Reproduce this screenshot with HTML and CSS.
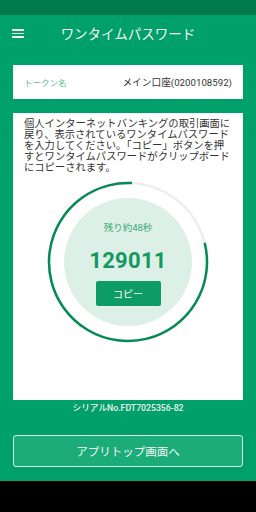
FILE: index.html
```html
<!DOCTYPE html>
<html lang="ja">
<head>
    <meta charset="UTF-8">
    <meta name="viewport" content="width=device-width, initial-scale=1.0">
    <title>ワンタイムパスワード</title>
    <link rel="stylesheet" href="styles.css">
</head>
<body>
    <div class="screen">
        <div class="status-bar"></div>

        <div class="app-bar">
            <div class="menu-icon">
                <span></span><span></span><span></span>
            </div>
            <h1>ワンタイムパスワード</h1>
            <div></div>
        </div>

        <div class="content">
            <div class="card token-card">
                <div class="token-label">トークン名</div>
                <div class="token-value">メイン口座(0200108592)</div>
            </div>

            <div class="card otp-card">
                <p class="notice">個人インターネットバンキングの取引画面に戻り、表示されているワンタイムパスワードを入力してください。「コピー」ボタンを押すとワンタイムパスワードがクリップボードにコピーされます。</p>

                <div class="timer">
                    <svg class="timer-ring" width="162" height="162" viewBox="0 0 162 162">
                        <circle cx="81" cy="81" r="79" fill="none" stroke="#eeeeee" stroke-width="2.5"/>
                        <circle cx="81" cy="81" r="79" fill="none" stroke="#058a52" stroke-width="2.5"
                                stroke-dasharray="395 500" transform="rotate(-14 81 81)"/>
                    </svg>
                    <div class="timer-disc">
                        <div class="remaining">残り約48秒</div>
                        <div class="otp-number" id="otp">129011</div>
                        <button class="copy-btn" id="copy-btn">コピー</button>
                    </div>
                </div>
            </div>

            <div class="serial">シリアルNo.FDT7025356-82</div>

            <button class="top-btn">アプリトップ画面へ</button>
        </div>

        <div class="nav-bar"></div>
    </div>
</body>
</html>
```

FILE: styles.css
```css
* {
    margin: 0;
    padding: 0;
    box-sizing: border-box;
    font-family: Roboto, 'Noto Sans CJK JP', sans-serif;
}

:root {
    --brand: #00a06a;
    --brand-dark: #007a4d;
    --ring: #058a52;
    --text: #333333;
}

body {
    background: #000;
}

.screen {
    width: 256px;
    height: 512px;
    display: flex;
    flex-direction: column;
    background: var(--brand);
}

.status-bar {
    height: 15px;
    background: var(--brand-dark);
}

.app-bar {
    height: 37px;
    display: grid;
    grid-template-columns: 36px 1fr 36px;
    align-items: center;
}

.menu-icon {
    display: flex;
    flex-direction: column;
    gap: 2px;
    padding-left: 12px;
}

.menu-icon span {
    display: block;
    width: 12px;
    height: 1.5px;
    background: #f2f2f2;
}

.app-bar h1 {
    text-align: center;
    color: #f4f4f4;
    font-size: 13.5px;
    font-weight: 400;
    line-height: 20px;
}

.content {
    flex: 1;
    padding: 13px 13px 14px;
    display: flex;
    flex-direction: column;
}

.card {
    background: #fff;
}

.token-card {
    height: 34px;
    display: flex;
    justify-content: space-between;
    align-items: center;
    padding: 0 11px;
}

.token-label {
    color: #5cbf8f;
    font-size: 8.5px;
}

.token-value {
    color: var(--text);
    font-size: 9.7px;
}

.otp-card {
    height: 287px;
    margin-top: 14px;
    padding: 5px 11px 0;
}

.notice {
    color: var(--text);
    font-size: 10.3px;
    line-height: 11px;
}

.timer {
    position: relative;
    width: 162px;
    height: 162px;
    margin: 8px auto 0;
    display: flex;
    align-items: center;
    justify-content: center;
}

.timer-ring {
    position: absolute;
    top: 0;
    left: 0;
}

.timer-disc {
    width: 128px;
    height: 128px;
    border-radius: 50%;
    background: #dcf0e7;
    display: flex;
    flex-direction: column;
    align-items: center;
    padding-top: 24px;
}

.remaining {
    color: #3fa977;
    font-size: 9.5px;
    line-height: 12px;
}

.otp-number {
    margin-top: 14px;
    color: #13995f;
    font-size: 22px;
    font-weight: 700;
    line-height: 26px;
    letter-spacing: 0.3px;
}

.copy-btn {
    margin-top: 7px;
    width: 65px;
    height: 25px;
    border: none;
    border-radius: 2px;
    background: #0d9c63;
    color: #fff;
    font-size: 10px;
}

.serial {
    text-align: center;
    color: #f0f0f0;
    font-size: 8.7px;
    font-weight: 500;
    line-height: 17px;
}

.top-btn {
    margin-top: 18px;
    height: 32px;
    border: 1.5px solid #dcefe6;
    border-radius: 3px;
    background: #1bac79;
    color: #f6f6f6;
    font-size: 11.5px;
}

.nav-bar {
    height: 31px;
    background: #000;
}
```
